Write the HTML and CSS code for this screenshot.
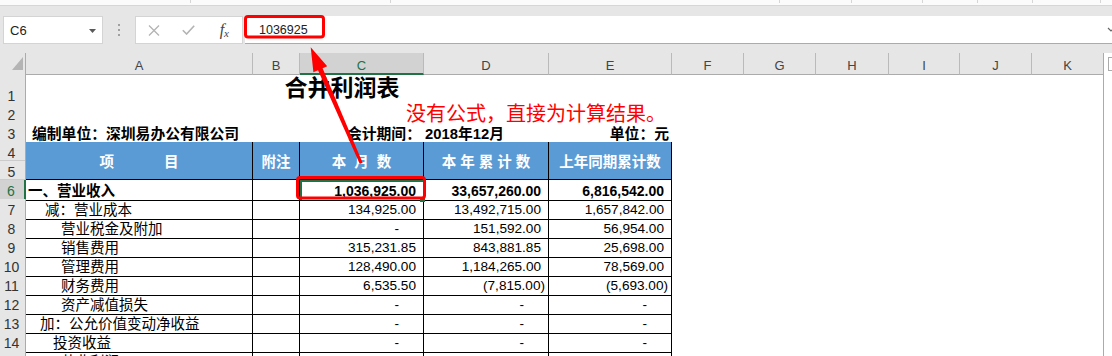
FILE: index.html
```html
<!DOCTYPE html>
<html lang="zh-CN">
<head>
    <meta charset="UTF-8">
    <meta name="viewport" content="width=device-width, initial-scale=1.0">
    <title>合并利润表</title>
    <link rel="stylesheet" href="styles.css">
</head>
<body>
    <div class="window">
        <!-- Bottom edge of the ribbon -->
        <div class="ribbon-foot">
            <div></div><div></div><div></div><div></div><div></div><div></div><div></div><div></div>
        </div>

        <!-- Name box and formula bar -->
        <div class="formula-bar">
            <div class="name-box">
                <span>C6</span>
                <svg class="caret" width="7" height="4" viewBox="0 0 7 4"><path d="M0 0H7L3.5 4Z" fill="#595959"/></svg>
            </div>
            <div class="grip"><i></i><i></i><i></i></div>
            <div class="fx-buttons">
                <span class="fx-btn"><svg width="12" height="11" viewBox="0 0 12 11"><path d="M1 0.5L11 10.5M11 0.5L1 10.5" stroke="#b3b3b3" stroke-width="1.3" fill="none"/></svg></span>
                <span class="fx-btn"><svg width="13" height="10" viewBox="0 0 13 10"><path d="M0.8 5.2L4.6 9L12.2 0.8" stroke="#b3b3b3" stroke-width="1.6" fill="none"/></svg></span>
                <span class="fx-btn fx"><i>f</i><i class="sub">x</i></span>
            </div>
            <div class="formula-input">
                <span>1036925</span>
                <svg class="expand" width="8" height="6" viewBox="0 0 8 6"><path d="M4 1L7 4L10 1" stroke="#666" stroke-width="1.2" fill="none"/></svg>
            </div>
        </div>

        <!-- Worksheet -->
        <div class="sheet">
            <div class="grid">
                <div class="row col-heads">
                    <div class="corner"><svg width="11" height="13" viewBox="0 0 11 13"><path d="M11 0V13H0Z" fill="#b4b4b4"/></svg></div>
                    <div class="ch">A</div>
                    <div class="ch">B</div>
                    <div class="ch sel">C</div>
                    <div class="ch">D</div>
                    <div class="ch">E</div>
                    <div class="ch">F</div>
                    <div class="ch">G</div>
                    <div class="ch">H</div>
                    <div class="ch">I</div>
                    <div class="ch">J</div>
                    <div class="ch">K</div>
                </div>

                <div class="row title-row">
                    <div class="rh">1</div>
                    <div class="cell title">合并利润表</div>
                </div>

                <div class="row">
                    <div class="rh">2</div>
                </div>

                <div class="row">
                    <div class="rh">3</div>
                    <div class="cell info company">编制单位：深圳易办公有限公司</div>
                    <div class="cell info"></div>
                    <div class="cell info period">会计期间： 2018年12月</div>
                    <div class="cell info unit">单位：元</div>
                </div>

                <div class="row head-row">
                    <div class="rh rh-double"><span>4</span><span>5</span></div>
                    <div class="cell th th-item">项 目</div>
                    <div class="cell th">附注</div>
                    <div class="cell th th-month">本 月 数</div>
                    <div class="cell th">本 年 累 计 数</div>
                    <div class="cell th">上年同期累计数</div>
                </div>

                <div class="row">
                    <div class="rh sel">6</div>
                    <div class="cell td total">一、营业收入</div>
                    <div class="cell td"></div>
                    <div class="cell td num total active">1,036,925.00</div>
                    <div class="cell td num total">33,657,260.00</div>
                    <div class="cell td num total">6,816,542.00</div>
                </div>

                <div class="row">
                    <div class="rh">7</div>
                    <div class="cell td indent-2">减：营业成本</div>
                    <div class="cell td"></div>
                    <div class="cell td num">134,925.00</div>
                    <div class="cell td num">13,492,715.00</div>
                    <div class="cell td num">1,657,842.00</div>
                </div>

                <div class="row">
                    <div class="rh">8</div>
                    <div class="cell td indent-4">营业税金及附加</div>
                    <div class="cell td"></div>
                    <div class="cell td num dash">-</div>
                    <div class="cell td num">151,592.00</div>
                    <div class="cell td num">56,954.00</div>
                </div>

                <div class="row">
                    <div class="rh">9</div>
                    <div class="cell td indent-4">销售费用</div>
                    <div class="cell td"></div>
                    <div class="cell td num">315,231.85</div>
                    <div class="cell td num">843,881.85</div>
                    <div class="cell td num">25,698.00</div>
                </div>

                <div class="row">
                    <div class="rh">10</div>
                    <div class="cell td indent-4">管理费用</div>
                    <div class="cell td"></div>
                    <div class="cell td num">128,490.00</div>
                    <div class="cell td num">1,184,265.00</div>
                    <div class="cell td num">78,569.00</div>
                </div>

                <div class="row">
                    <div class="rh">11</div>
                    <div class="cell td indent-4">财务费用</div>
                    <div class="cell td"></div>
                    <div class="cell td num">6,535.50</div>
                    <div class="cell td num neg">(7,815.00)</div>
                    <div class="cell td num neg">(5,693.00)</div>
                </div>

                <div class="row">
                    <div class="rh">12</div>
                    <div class="cell td indent-4">资产减值损失</div>
                    <div class="cell td"></div>
                    <div class="cell td num dash">-</div>
                    <div class="cell td num dash">-</div>
                    <div class="cell td num dash">-</div>
                </div>

                <div class="row">
                    <div class="rh">13</div>
                    <div class="cell td indent-1">加：公允价值变动净收益</div>
                    <div class="cell td"></div>
                    <div class="cell td num dash">-</div>
                    <div class="cell td num dash">-</div>
                    <div class="cell td num dash">-</div>
                </div>

                <div class="row">
                    <div class="rh">14</div>
                    <div class="cell td indent-3">投资收益</div>
                    <div class="cell td"></div>
                    <div class="cell td num dash">-</div>
                    <div class="cell td num dash">-</div>
                    <div class="cell td num dash">-</div>
                </div>

                <div class="row">
                    <div class="rh">15</div>
                    <div class="cell td indent-4">营业利润</div>
                    <div class="cell td"></div>
                    <div class="cell td"></div>
                    <div class="cell td"></div>
                    <div class="cell td"></div>
                </div>
            </div>
            <div class="vscroll"><div></div></div>
        </div>

        <!-- Annotations drawn over the sheet -->
        <div class="note">没有公式，直接为计算结果。</div>
        <svg class="marks" width="1112" height="356" viewBox="0 0 1112 356">
            <rect x="245.5" y="16.5" width="78" height="20.5" rx="2.5" fill="none" stroke="#ff0000" stroke-width="3"/>
            <rect x="297.5" y="177.5" width="127" height="20.5" rx="2.5" fill="none" stroke="#ff0000" stroke-width="3"/>
            <polygon points="310.7,47.3 327.2,66.3 322.6,68.3 362.6,162.7 359.8,163.9 318.0,70.3 313.4,72.3" fill="#ff0000"/>
        </svg>
    </div>
</body>
</html>
```

FILE: styles.css
```css
/* Excel window: formula bar and worksheet */
* {
    box-sizing: border-box;
}

body {
    margin: 0;
    font-family: "Liberation Sans", "Noto Sans CJK SC", sans-serif;
    color: #000;
    background-color: #fff;
}

.window {
    position: relative;
    width: 1112px;
    height: 356px;
    overflow: hidden;
}

/* Ribbon edge */
.ribbon-foot {
    display: grid;
    grid-template-columns: 191px 200px 389px 72px 71px 55px 55px 68px;
    height: 6px;
    background-color: #fbfbfb;
    border-bottom: 1px solid #d6d6d6;
}

.ribbon-foot div {
    height: 3px;
    border-right: 1px solid #d6d6d6;
}

/* Formula bar */
.formula-bar {
    display: flex;
    height: 47px;
    padding: 10px 0 9px 3px;
    background-color: #e6e6e6;
}

.name-box {
    display: flex;
    align-items: center;
    width: 100px;
    padding: 1px 6px 0 6px;
    background-color: #fff;
    border: 1px solid #d4d4d4;
    font-size: 13px;
    color: #222;
}

.name-box .caret {
    margin-left: auto;
}

.grip {
    display: flex;
    flex-direction: column;
    justify-content: center;
    align-items: center;
    gap: 3px;
    width: 32px;
}

.grip i {
    width: 2px;
    height: 2px;
    background-color: #a0a0a0;
}

.fx-buttons {
    display: flex;
    width: 108px;
    background-color: #fff;
    border: 1px solid #d4d4d4;
}

.fx-btn {
    flex: 1;
    display: flex;
    align-items: center;
    justify-content: center;
}

.fx {
    font-family: "Liberation Serif", serif;
    font-size: 16px;
    color: #444;
}

.fx .sub {
    font-size: 11px;
    margin-top: 5px;
}

.formula-input {
    flex: 1;
    display: flex;
    align-items: center;
    margin-left: 2px;
    padding: 1px 0 0 14px;
    background-color: #fff;
    border-bottom: 1px solid #ababab;
    font-size: 12.5px;
    color: #222;
}

.formula-input .expand {
    margin-left: auto;
}

/* Worksheet grid */
.sheet {
    display: flex;
    height: 303px;
}

.grid {
    width: 1104px;
    border-right: 1px solid #ababab;
}

.vscroll {
    width: 8px;
    padding: 4px 0 0 4px;
}

.vscroll div {
    height: 14px;
    border: 1px solid #ababab;
    border-right: none;
}

.row {
    display: grid;
    grid-template-columns: 26px 227px 47px 124px 125px 123px 72px 72px 73px 71px 72px 71px;
    height: 19px;
}

.col-heads {
    height: 20px;
}

.title-row {
    height: 31px;
}

.head-row {
    height: 38px;
}

.corner,
.ch {
    background-color: #e6e6e6;
    border-right: 1px solid #bababa;
    border-bottom: 1px solid #ababab;
}

.corner {
    display: flex;
    align-items: flex-end;
    justify-content: flex-end;
    padding: 0 2px 4px 0;
    border-right-color: #ababab;
}

.ch {
    padding-top: 5px;
    text-align: center;
    font-size: 13px;
    line-height: 15px;
    color: #444;
}

.ch:last-child {
    border-right: none;
}

.ch.sel {
    background-color: #d2d2d2;
    color: #217346;
    border-bottom: 2px solid #217346;
}

/* Row numbers */
.rh {
    padding: 2px 2px 0 0;
    text-align: center;
    font-size: 14px;
    line-height: 18px;
    color: #333;
    background-color: #e6e6e6;
    border-right: 1px solid #ababab;
    border-bottom: 1px solid #cbcbcb;
}

.title-row .rh {
    padding-top: 14px;
}

.rh-double {
    display: flex;
    flex-direction: column;
    padding: 0;
    border-bottom: none;
}

.rh-double span {
    height: 19px;
    padding: 2px 2px 0 0;
    border-bottom: 1px solid #cbcbcb;
}

.rh.sel {
    background-color: #d2d2d2;
    color: #217346;
    border-right: 2px solid #217346;
}

/* Cells */
.cell {
    padding: 2px 0 0 2px;
    font-size: 14.5px;
    line-height: 18px;
    white-space: nowrap;
}

.td {
    border-right: 1px solid #000;
    border-bottom: 1px solid #000;
}

.title {
    grid-column: 2 / 7;
    padding: 0 14px 0 0;
    text-align: center;
    font-size: 23px;
    font-weight: bold;
    line-height: 31px;
}

.info {
    border-bottom: 1px solid #000;
    font-size: 14.8px;
    font-weight: bold;
}

.info.company {
    padding-left: 6px;
}

.info.period {
    grid-column: span 2;
    text-align: center;
}

.info.unit {
    padding-right: 3px;
    text-align: right;
}

.th {
    display: flex;
    align-items: center;
    justify-content: center;
    padding: 2px 0 0;
    background-color: #5b9bd5;
    color: #fff;
    font-weight: bold;
    border-right: 1px solid #000;
    border-bottom: 1px solid #000;
}

.th-item {
    word-spacing: 46px;
}

.th-month {
    word-spacing: 4px;
}

.num {
    padding-right: 7px;
    text-align: right;
    font-size: 13.6px;
}

.num.neg {
    padding-right: 3px;
}

.num.dash {
    padding-right: 24px;
}

.total {
    font-weight: bold;
}

.num.total {
    font-size: 14px;
}

.indent-1 {
    padding-left: 14px;
}

.indent-2 {
    padding-left: 19px;
}

.indent-3 {
    padding-left: 27px;
}

.indent-4 {
    padding-left: 35px;
}

/* Selected cell C6 */
.active {
    position: relative;
    box-shadow: inset 2px 2px 0 #217346;
}

.active::after {
    content: "";
    position: absolute;
    right: -2px;
    bottom: -2px;
    width: 5px;
    height: 5px;
    background-color: #217346;
}

/* Red callouts */
.note {
    position: absolute;
    left: 406px;
    top: 104px;
    font-size: 20px;
    line-height: 20px;
    color: #ff0000;
    white-space: nowrap;
}

.marks {
    position: absolute;
    left: 0;
    top: 0;
}
```
